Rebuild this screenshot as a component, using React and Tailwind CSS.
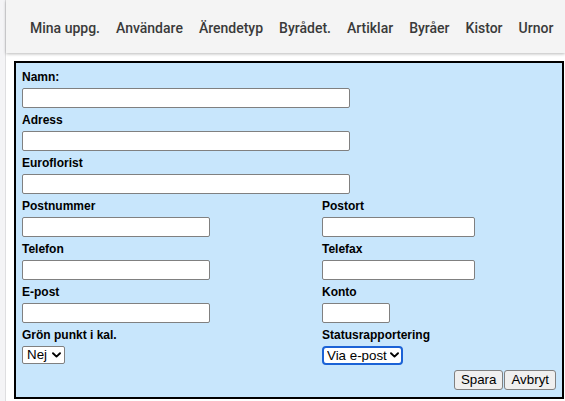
import React from "react";

const navItems = [
  "Mina uppg.",
  "Användare",
  "Ärendetyp",
  "Byrådet.",
  "Artiklar",
  "Byråer",
  "Kistor",
  "Urnor",
];

function Label({ children, first }) {
  return (
    <div
      className={
        "block text-[12px] font-bold leading-[15px] text-black " +
        (first ? "" : "mt-[5px]")
      }
    >
      {children}
    </div>
  );
}

function TextInput({ width }) {
  return (
    <input
      type="text"
      className="mt-[3px] block h-[20px] rounded-[2px] border border-[#808080] bg-white px-[2px] text-[13px] outline-none"
      style={{ width }}
    />
  );
}

function Chevron() {
  return (
    <svg
      width="9"
      height="6"
      viewBox="0 0 9 6"
      className="pointer-events-none absolute right-[4px] top-[6px]"
    >
      <path
        d="M1 1.2 L4.5 4.6 L8 1.2"
        fill="none"
        stroke="#000"
        strokeWidth="1.9"
        strokeLinecap="round"
        strokeLinejoin="round"
      />
    </svg>
  );
}

function Select({ value, width, focused }) {
  return (
    <div className="relative mt-[3px] w-fit">
      <select
        defaultValue={value}
        className={
          "block appearance-none bg-white p-0 text-[13.33px] leading-none text-black outline-none " +
          (focused
            ? "h-[19px] rounded-[4px] border-2 border-[#1b62d6] pl-[3px]"
            : "h-[18px] rounded-[2px] border border-[#808080] pl-[4px]")
        }
        style={{ width }}
      >
        <option>{value}</option>
      </select>
      <Chevron />
    </div>
  );
}

export default function App() {
  return (
    <div className="flex min-h-[401px] bg-white font-['Liberation_Sans',Arial,sans-serif]">
      <div className="w-[6px] shrink-0 border-r border-[#dedee0] bg-[#f4f4f6]" />
      <div className="min-w-0 flex-1">
        <nav className="flex h-[53px] gap-[16px] bg-[#f4f4f4] pl-[24px] pt-[20px] font-['Roboto',sans-serif] text-[14px] font-medium leading-4 text-[#3a3a3a] shadow-[0_1px_3px_rgba(0,0,0,0.28)]">
          {navItems.map((item) => (
            <span key={item} className="whitespace-nowrap">
              {item}
            </span>
          ))}
        </nav>

        <div className="ml-[8px] mt-[8px] w-[550px] border-2 border-black bg-[#c8e6fc] px-[6px] pb-[7px] pt-[7px]">
          <Label first>Namn:</Label>
          <TextInput width={328} />
          <Label>Adress</Label>
          <TextInput width={328} />
          <Label>Euroflorist</Label>
          <TextInput width={328} />

          <div className="grid grid-cols-[300px_1fr]">
            <div>
              <Label>Postnummer</Label>
              <TextInput width={188} />
              <Label>Telefon</Label>
              <TextInput width={188} />
              <Label>E-post</Label>
              <TextInput width={188} />
              <Label>Grön punkt i kal.</Label>
              <Select value="Nej" width={43} />
            </div>
            <div>
              <Label>Postort</Label>
              <TextInput width={153} />
              <Label>Telefax</Label>
              <TextInput width={153} />
              <Label>Konto</Label>
              <TextInput width={68} />
              <Label>Statusrapportering</Label>
              <Select value="Via e-post" width={81} focused />
            </div>
          </div>

          <div className="mt-[5px] flex justify-end gap-px">
            <button className="h-[20px] rounded-[3px] border border-[#808080] bg-[#efefef] px-[6px] text-[13.33px] leading-none text-black">
              Spara
            </button>
            <button className="h-[20px] rounded-[3px] border border-[#808080] bg-[#efefef] px-[6px] text-[13.33px] leading-none text-black">
              Avbryt
            </button>
          </div>
        </div>
      </div>
    </div>
  );
}
